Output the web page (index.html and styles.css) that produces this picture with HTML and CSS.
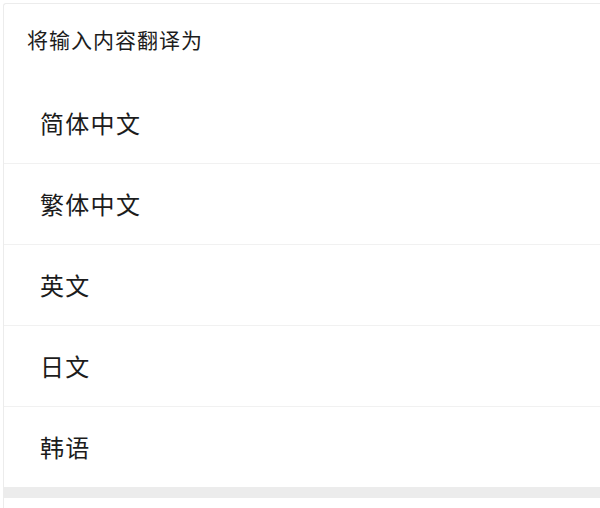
FILE: index.html
```html
<!DOCTYPE html>
<html lang="zh">
<head>
<meta charset="utf-8">
<link rel="stylesheet" href="styles.css">
</head>
<body>
<div class="sheet">
  <div class="title">将输入内容翻译为</div>
  <ul class="list">
    <li class="item">简体中文</li>
    <li class="item">繁体中文</li>
    <li class="item">英文</li>
    <li class="item">日文</li>
    <li class="item">韩语</li>
  </ul>
  <div class="footer-bar"></div>
</div>
</body>
</html>
```

FILE: styles.css
```css
html, body {
  margin: 0;
  padding: 0;
  background: #ffffff;
}
body {
  font-family: "Noto Sans CJK SC", "Noto Sans", sans-serif;
  color: #1c1c1c;
  width: 600px;
  height: 508px;
  overflow: hidden;
}
.sheet {
  margin: 3px 0 0 3px;
  border-top: 1px solid #ececec;
  border-left: 1px solid #ececec;
  border-top-left-radius: 3px;
  height: 520px;
}
.title {
  box-sizing: border-box;
  height: 79px;
  padding: 21px 0 0 23px;
  font-size: 21px;
  line-height: 28px;
  letter-spacing: 1px;
}
.list {
  list-style: none;
  margin: 0;
  padding: 0;
}
.item {
  box-sizing: border-box;
  height: 81px;
  display: flex;
  align-items: center;
  padding-left: 36px;
  padding-bottom: 2px;
  font-size: 24px;
  letter-spacing: 1.3px;
  border-bottom: 1px solid #f1f1f1;
}
.item:last-child {
  height: 80px;
  border-bottom: none;
}
.footer-bar {
  height: 11px;
  background: #ececec;
}
```
